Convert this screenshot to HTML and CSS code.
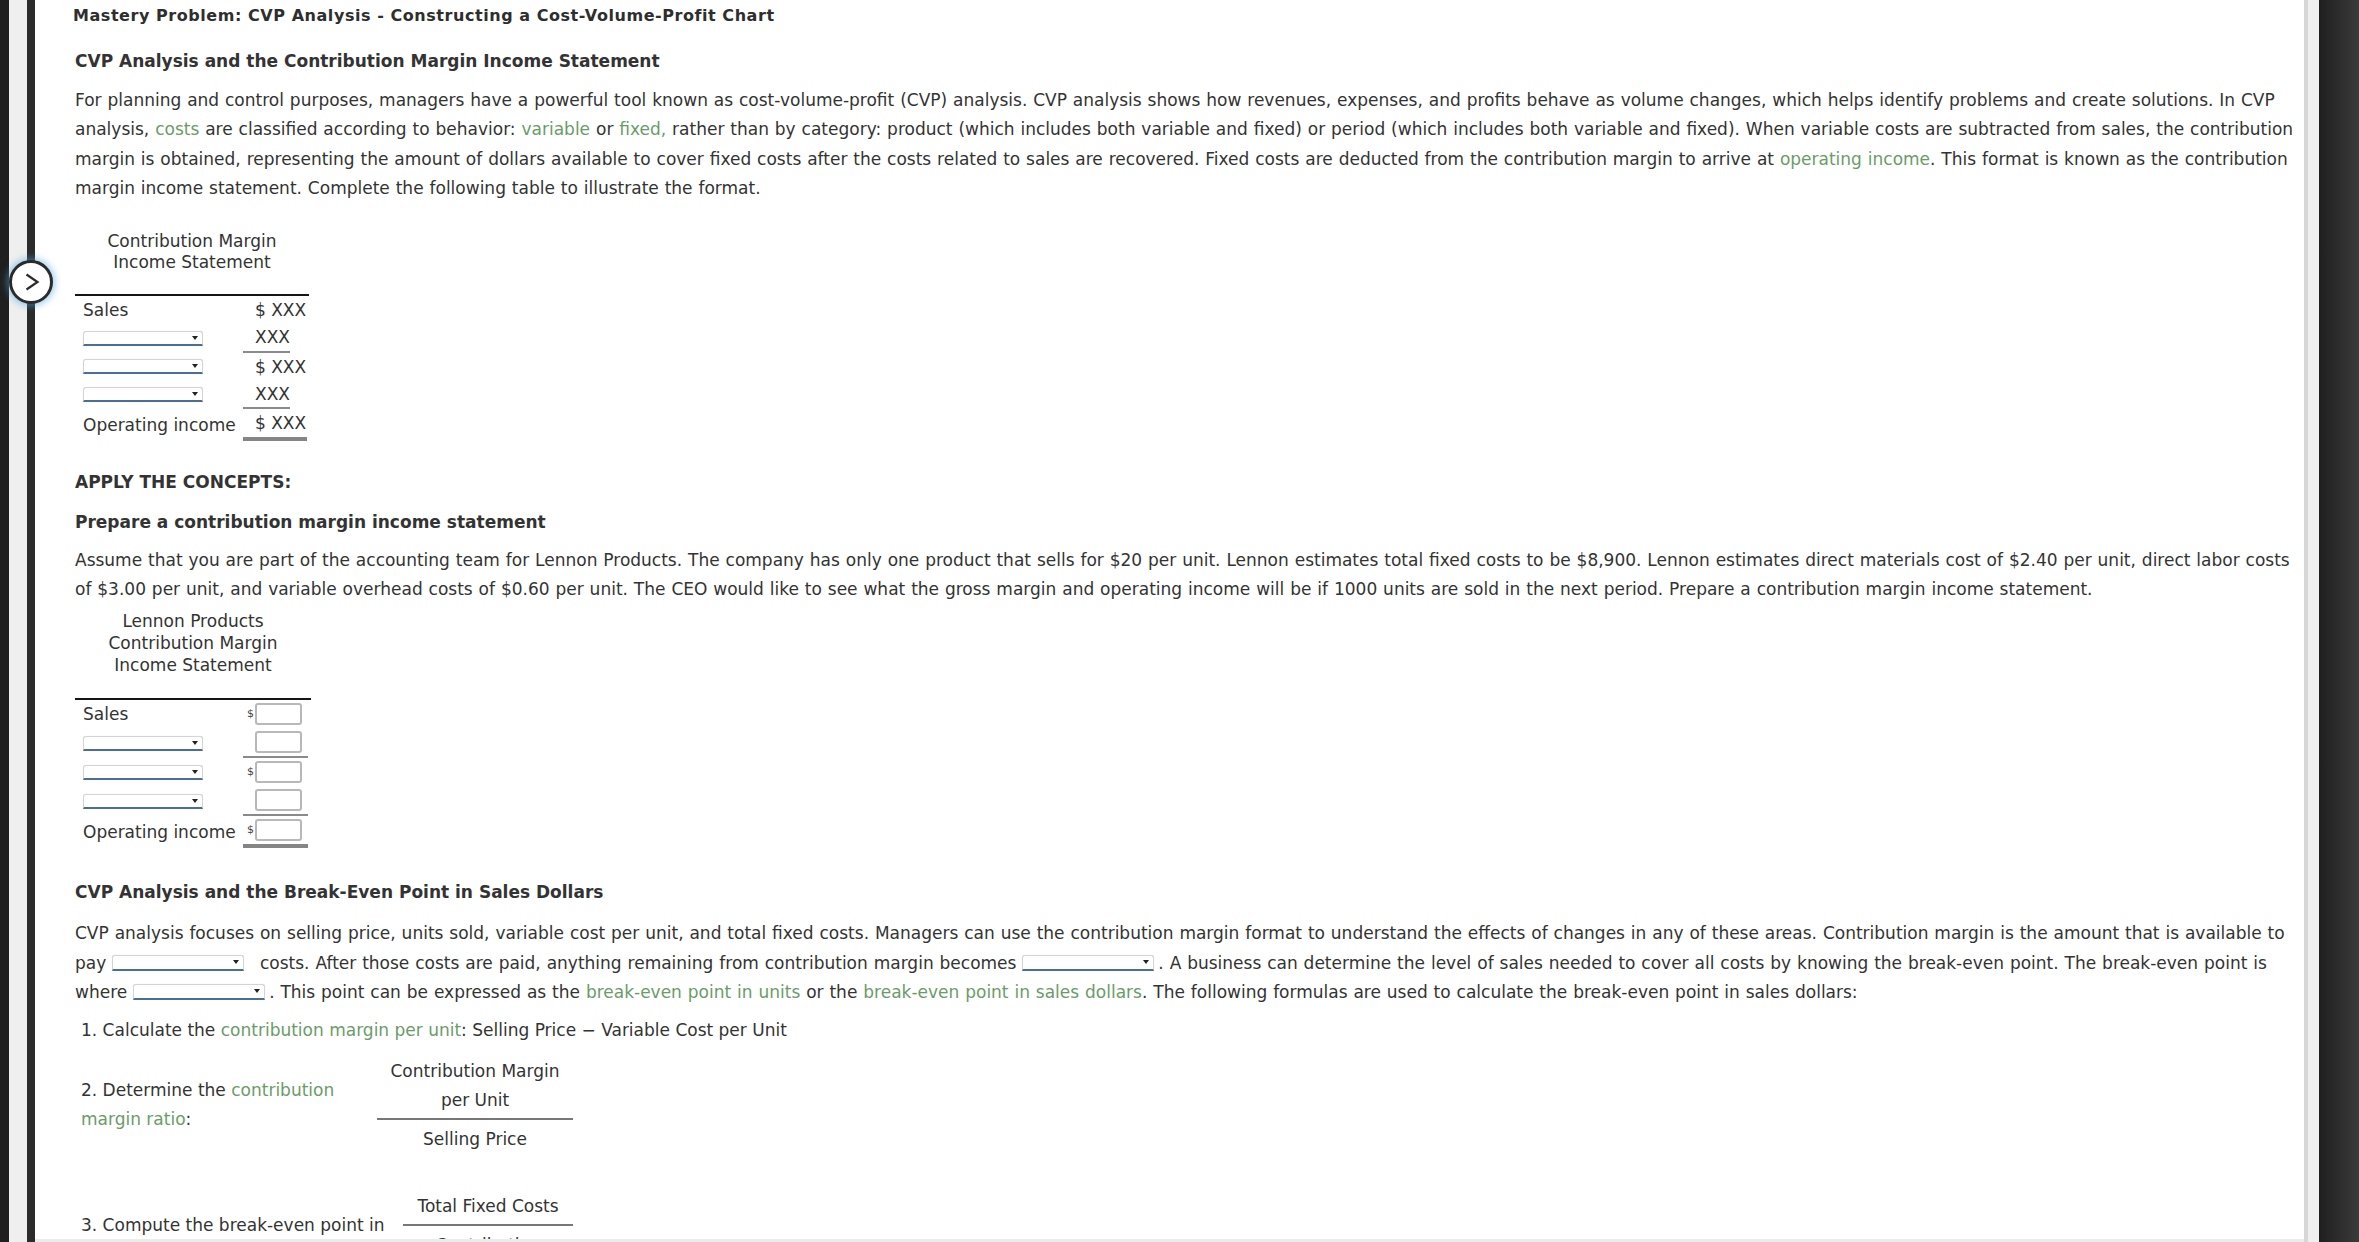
FILE: index.html
```html
<!DOCTYPE html>
<html lang="en">
<head>
<meta charset="utf-8">
<title>Mastery Problem: CVP Analysis</title>
<link rel="stylesheet" href="styles.css">
</head>
<body>
<div class="frame">
  <div class="rail-left"><div class="rl-a"></div><div class="rl-b"></div><div class="rl-c"></div></div>
  <main class="content">
    <h1 class="title">Mastery Problem: CVP Analysis - Constructing a Cost-Volume-Profit Chart</h1>

    <h2 class="head h-first">CVP Analysis and the Contribution Margin Income Statement</h2>
    <p class="para p1">For planning and control purposes, managers have a powerful tool known as cost-volume-profit (CVP) analysis. CVP analysis shows how revenues, expenses, and profits behave as volume changes, which helps identify problems and create solutions. In CVP<br>analysis, <span class="term">costs</span> are classified according to behavior: <span class="term">variable</span> or <span class="term">fixed,</span> rather than by category: product (which includes both variable and fixed) or period (which includes both variable and fixed). When variable costs are subtracted from sales, the contribution<br>margin is obtained, representing the amount of dollars available to cover fixed costs after the costs related to sales are recovered. Fixed costs are deducted from the contribution margin to arrive at <span class="term">operating income</span>. This format is known as the contribution<br>margin income statement. Complete the following table to illustrate the format.</p>

    <div class="stmt stmt-one">
      <div class="stmt-title">Contribution Margin<br>Income Statement</div>
      <div class="stmt-table">
        <div class="lbl">Sales</div><div class="amt"><span class="val">$ XXX</span></div>
        <div class="lbl"><span class="dd dd-tbl"></span></div><div class="amt"><span class="val ul">XXX</span></div>
        <div class="lbl"><span class="dd dd-tbl"></span></div><div class="amt"><span class="val">$ XXX</span></div>
        <div class="lbl"><span class="dd dd-tbl"></span></div><div class="amt"><span class="val ul">XXX</span></div>
        <div class="lbl last">Operating income</div><div class="amt last"><span class="val dbl">$ XXX</span></div>
      </div>
    </div>

    <h2 class="head h-apply">APPLY THE CONCEPTS:</h2>
    <h2 class="head h-prep">Prepare a contribution margin income statement</h2>
    <p class="para p2">Assume that you are part of the accounting team for Lennon Products. The company has only one product that sells for $20 per unit. Lennon estimates total fixed costs to be $8,900. Lennon estimates direct materials cost of $2.40 per unit, direct labor costs<br>of $3.00 per unit, and variable overhead costs of $0.60 per unit. The CEO would like to see what the gross margin and operating income will be if 1000 units are sold in the next period. Prepare a contribution margin income statement.</p>

    <div class="stmt stmt-two">
      <div class="stmt-title lennon">Lennon Products<br>Contribution Margin<br>Income Statement</div>
      <div class="stmt-table inputs">
        <div class="lbl">Sales</div><div class="amt"><span class="box"><span class="cur">$</span><span class="inp"></span></span></div>
        <div class="lbl"><span class="dd dd-tbl"></span></div><div class="amt"><span class="box ul"><span class="cur"></span><span class="inp"></span></span></div>
        <div class="lbl"><span class="dd dd-tbl"></span></div><div class="amt"><span class="box"><span class="cur">$</span><span class="inp"></span></span></div>
        <div class="lbl"><span class="dd dd-tbl"></span></div><div class="amt"><span class="box ul"><span class="cur"></span><span class="inp"></span></span></div>
        <div class="lbl">Operating income</div><div class="amt"><span class="box dbl"><span class="cur">$</span><span class="inp"></span></span></div>
      </div>
    </div>

    <h2 class="head h-be">CVP Analysis and the Break-Even Point in Sales Dollars</h2>
    <p class="para p3">CVP analysis focuses on selling price, units sold, variable cost per unit, and total fixed costs. Managers can use the contribution margin format to understand the effects of changes in any of these areas. Contribution margin is the amount that is available to<br>pay <span class="dd dd-in"></span>&nbsp; costs. After those costs are paid, anything remaining from contribution margin becomes <span class="dd dd-in"></span>. A business can determine the level of sales needed to cover all costs by knowing the break-even point. The break-even point is<br>where <span class="dd dd-in"></span>. This point can be expressed as the <span class="term">break-even point in units</span> or the <span class="term">break-even point in sales dollars</span>. The following formulas are used to calculate the break-even point in sales dollars:</p>

    <div class="step s1">1. Calculate the <span class="term">contribution margin per unit</span>: Selling Price − Variable Cost per Unit</div>

    <div class="step-row s2">
      <div class="step-text">2. Determine the <span class="term">contribution</span><br><span class="term">margin ratio</span>:</div>
      <div class="frac">
        <div class="num">Contribution Margin<br>per Unit</div>
        <div class="den">Selling Price</div>
      </div>
    </div>

    <div class="step-row s3">
      <div class="step-text">3. Compute the break-even point in<br>sales dollars:</div>
      <div class="frac">
        <div class="num">Total Fixed Costs</div>
        <div class="den">Contribution<br>Margin Ratio</div>
      </div>
    </div>
  </main>
  <div class="rail-right"><div class="rr-a"></div><div class="rr-b"></div><div class="rr-c"></div></div>
</div>

<div class="nav-circle">
  <svg width="16" height="18" viewBox="0 0 16 18"><polyline points="2.5,1.5 13.5,9 2.5,16.5" fill="none" stroke="#2b2b2b" stroke-width="2.2" stroke-linejoin="miter"/></svg>
</div>
<div class="bottom-edge"></div>
</body>
</html>
```

FILE: styles.css
```css
html, body {
  margin: 0;
  padding: 0;
  background: #ffffff;
}

body {
  font-family: "DejaVu Sans", Verdana, sans-serif;
  color: #333333;
  overflow: hidden;
}

.frame {
  display: flex;
  height: 1242px;
  overflow: hidden;
}

.rail-left {
  flex: 0 0 35px;
  display: flex;
}
.rl-a { width: 9px; background: #1f1f1f; }
.rl-b { width: 18px; background: #efefef; }
.rl-c { width: 8px; background: #2b2b2b; }

.rail-right {
  flex: 0 0 55px;
  display: flex;
}
.rr-a { width: 4px; background: #d6d6d6; }
.rr-b { width: 11px; background: #efefef; }
.rr-c { flex: 1; background: linear-gradient(to right, #1e1e1e 0px, #262626 10px, #3a3a3a 40px); }

.content {
  flex: 1;
  min-width: 0;
  padding: 4px 0 0 40px;
  overflow: hidden;
}

.title {
  margin: 0 0 0 -2px;
  font-size: 16px;
  letter-spacing: 0.55px;
  line-height: 24px;
  font-weight: bold;
  color: #2e2e2e;
}

.head {
  margin: 0;
  font-size: 17px;
  line-height: 24px;
  font-weight: bold;
  color: #333333;
}
.h-first { margin-top: 21px; }
.h-apply { margin-top: 29px; }
.h-prep { margin-top: 15.5px; }
.h-be { margin-top: 32px; }

.para {
  margin: 0;
  font-size: 17px;
  line-height: 29.3px;
  word-spacing: 0.5px;
  white-space: nowrap;
}
.p1 { margin-top: 13px; }
.p2 { margin-top: 12.5px; }
.p3 { margin-top: 15px; }

.term { color: #6a9c68; }

/* statements */
.stmt-title {
  font-size: 17px;
  line-height: 21px;
  text-align: center;
  width: 234px;
}
.stmt-one .stmt-title { margin-top: 28px; }
.stmt-title.lennon {
  margin-top: 5.5px;
  line-height: 22px;
  width: 236px;
}

.stmt-table {
  display: grid;
  grid-template-columns: 168px 66px;
  width: 234px;
  border-top: 2px solid #151515;
  margin-top: 21px;
  font-size: 17px;
}
.stmt-table.inputs {
  grid-template-columns: 168px 68px;
  width: 236px;
  margin-top: 22px;
}

.lbl {
  padding-left: 8px;
  display: flex;
  align-items: center;
  white-space: nowrap;
}
.amt {
  display: flex;
  align-items: flex-start;
}
.val {
  display: inline-block;
  padding-left: 12px;
  line-height: 28px;
  white-space: nowrap;
}
.val.ul {
  line-height: 26.5px;
  border-bottom: 2px solid #8a8a8a;
}
.val.dbl {
  line-height: 28px;
  padding-right: 1px;
  border-bottom: 4px solid #858585;
}

/* dropdown */
.dd {
  display: inline-block;
  position: relative;
  box-sizing: border-box;
  background: #ffffff;
  border: 1px solid #d4d4d4;
  border-bottom: 2px solid #4b6e94;
  border-radius: 3px 3px 0 0;
  box-shadow: 0 0 1px rgba(0,0,0,0.15);
  vertical-align: middle;
}
.dd::after {
  content: "";
  position: absolute;
  right: 4px;
  top: 4px;
  border-left: 3px solid transparent;
  border-right: 3px solid transparent;
  border-top: 4px solid #222222;
}
.dd-tbl { width: 120px; height: 15px; }
.dd-in { width: 132px; height: 16px; margin: 0 4px 0 0; position: relative; top: -1px; }

/* input statement */
.box {
  display: inline-flex;
  align-items: center;
  padding: 3px 6px 3px 0;
}
.box.ul { border-bottom: 2px solid #8a8a8a; }
.box.dbl { border-bottom: 4px solid #858585; }
.cur {
  width: 12px;
  font-size: 11px;
  line-height: 22px;
  text-align: left;
  padding-left: 4px;
  box-sizing: border-box;
  color: #444444;
}
.inp {
  display: inline-block;
  width: 47px;
  height: 22px;
  box-sizing: border-box;
  border: 2px solid #b8b8b8;
  border-radius: 3px;
  background: #ffffff;
}

/* steps */
.step {
  margin-top: 9px;
  padding-left: 6px;
  font-size: 17px;
  line-height: 29px;
  white-space: nowrap;
}
.step-row {
  display: flex;
  align-items: center;
  padding-left: 6px;
  font-size: 17px;
  line-height: 29px;
}
.s2 { margin-top: 11.5px; }
.s3 { margin-top: 38px; }
.s2 .step-text { width: 296px; flex: 0 0 296px; }
.s3 .step-text { width: 322px; flex: 0 0 322px; white-space: nowrap; }
.frac { text-align: center; }
.s2 .frac { width: 196px; }
.s3 .frac { width: 170px; }
.num {
  padding-bottom: 3px;
  border-bottom: 2px solid #777777;
}
.den { padding-top: 5px; }

/* overlays */
.nav-circle {
  position: fixed;
  left: 9px;
  top: 260px;
  width: 44px;
  height: 44px;
  box-sizing: border-box;
  border: 3.5px solid #2b2b2b;
  border-radius: 50%;
  background: #ffffff;
  box-shadow: 0 0 7px 2px rgba(80, 165, 225, 0.55);
  display: flex;
  align-items: center;
  justify-content: center;
}
.nav-circle svg { margin-left: 1px; }

.bottom-edge {
  position: fixed;
  left: 35px;
  right: 55px;
  bottom: 0;
  height: 3px;
  background: #ececec;
}
```
